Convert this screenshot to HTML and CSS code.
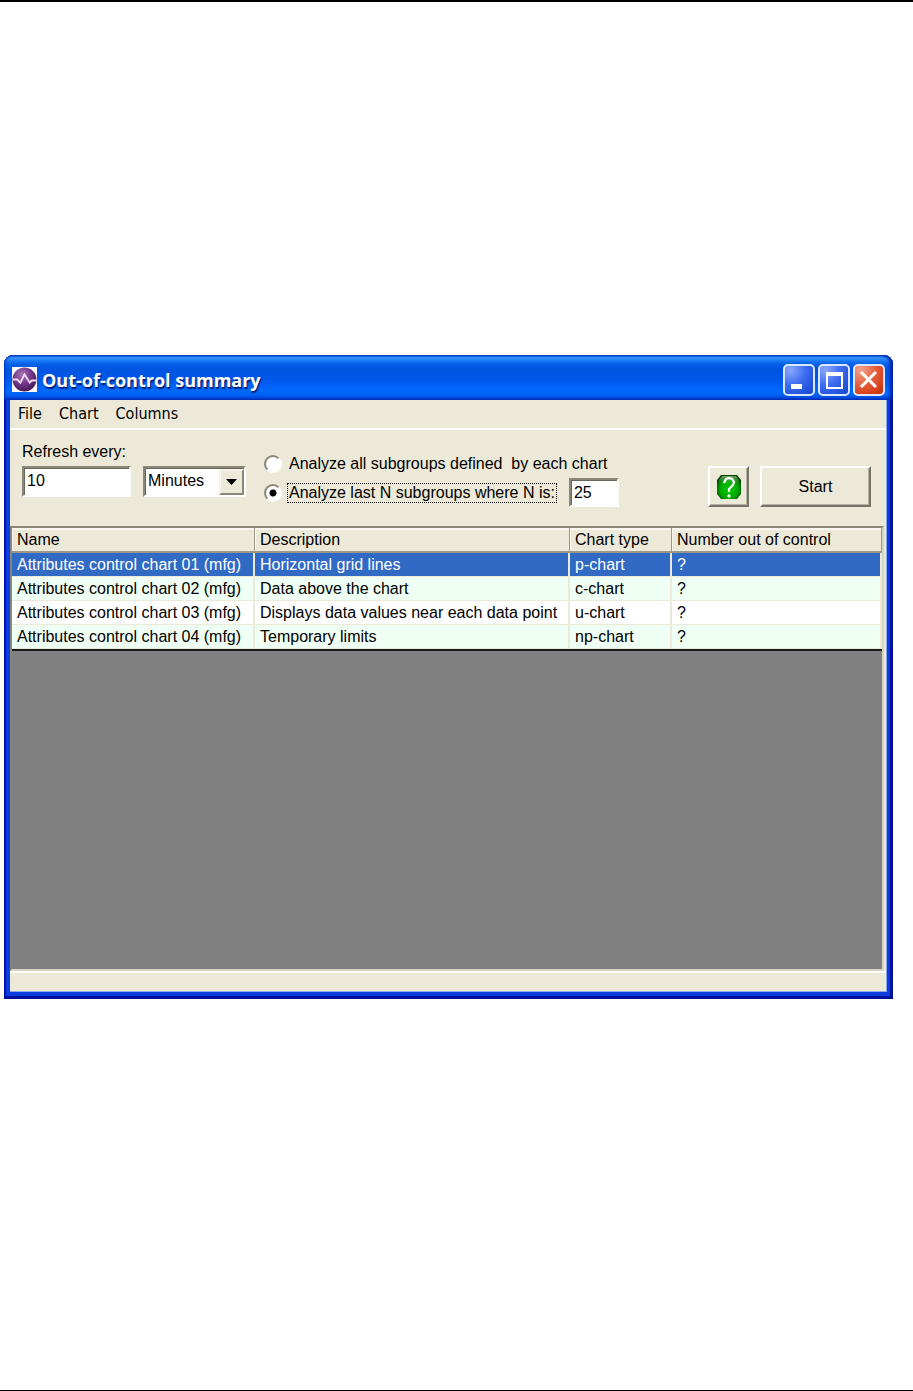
FILE: index.html
```html
<!DOCTYPE html>
<html lang="en">
<head>
<meta charset="utf-8">
<title>Out-of-control summary</title>
<link rel="stylesheet" href="styles.css">
</head>
<body>
<main class="window">
  <header class="titlebar">
    <svg class="app-icon" viewBox="0 0 24 24" aria-hidden="true">
      <defs><radialGradient id="orb" cx=".4" cy=".3" r=".75"><stop offset="0" stop-color="#a678b4"/><stop offset=".5" stop-color="#74388a"/><stop offset="1" stop-color="#421850"/></radialGradient></defs>
      <rect width="24" height="24" fill="#fff"/>
      <circle cx="12" cy="12" r="11.5" fill="url(#orb)"/>
      <path d="M1 12h4l3 3 4-8 5 8 2-2h5" fill="none" stroke="#f2dcf2" stroke-width="1.8"/>
    </svg>
    <h1 class="title">Out-of-control summary</h1>
    <div class="captions">
      <button class="caption" type="button" aria-label="Minimize"><svg viewBox="0 0 28 28"><path d="M6 18h11v5H6z" fill="#fff"/></svg></button>
      <button class="caption" type="button" aria-label="Maximize"><svg viewBox="0 0 28 28"><path d="M6 6h17v17H6zM8 10v11h13V10z" fill="#fff" fill-rule="evenodd"/></svg></button>
      <button class="caption caption-close" type="button" aria-label="Close"><svg viewBox="0 0 28 28"><path d="M6 6l15 15M21 6L6 21" stroke="#fff" stroke-width="3"/></svg></button>
    </div>
  </header>
  <div class="client">
    <nav class="menubar">
      <button class="menu" type="button">File</button>
      <button class="menu" type="button">Chart</button>
      <button class="menu" type="button">Columns</button>
    </nav>
    <form class="toolbar">
      <div class="refresh">
        <label class="refresh-label" for="every">Refresh every:</label>
        <div class="refresh-fields">
          <input class="field every" id="every" type="text" value="10">
          <div class="field select-box">
            <select class="select" aria-label="Refresh unit"><option>Minutes</option></select>
            <span class="select-arrow" aria-hidden="true"><svg viewBox="0 0 11 6"><path d="M0 0h11L5.500 6z"/></svg></span>
          </div>
        </div>
      </div>
      <div class="scope">
        <label class="choice"><input class="radio" type="radio" name="scope"><span class="choice-text">Analyze all subgroups defined&nbsp; by each chart</span></label>
        <div class="choice-row">
          <label class="choice"><input class="radio" type="radio" name="scope" checked><span class="choice-text choice-focus">Analyze last N subgroups where N is:</span></label>
          <input class="field count" type="text" value="25" aria-label="Number of subgroups">
        </div>
      </div>
      <div class="actions">
        <button class="push push-help" type="button" aria-label="Help">
          <svg viewBox="0 0 26 26">
            <defs><radialGradient id="leaf" cx=".5" cy=".6" r=".62"><stop offset="0" stop-color="#00cc00"/><stop offset=".6" stop-color="#00a800"/><stop offset="1" stop-color="#003800"/></radialGradient>
            <linearGradient id="shine" x2="0" y2="1"><stop offset="0" stop-color="#b0e0a8" stop-opacity=".6"/><stop offset="1" stop-color="#40b040" stop-opacity="0"/></linearGradient></defs>
            <path d="M5 1h16l4 5v14l-4 5H5l-4-5V6z" fill="url(#leaf)"/>
            <path d="M6 2h14l3 4v5H3V6z" fill="url(#shine)"/>
            <path d="M8 9l2-4 3-1 3 1 2 3-1 3-4 4v3" fill="none" stroke="#fff" stroke-width="2.200"/>
            <path d="M11 22l2-2 2 2-2 2z" fill="#fff"/>
          </svg>
        </button>
        <button class="push push-start" type="button">Start</button>
      </div>
    </form>
    <section class="grid-pane">
      <table class="grid">
        <colgroup><col class="col-name"><col class="col-description"><col class="col-type"><col></colgroup>
        <thead><tr><th scope="col">Name</th><th scope="col">Description</th><th scope="col">Chart type</th><th scope="col">Number out of control</th></tr></thead>
        <tbody>
          <tr class="selected"><td>Attributes control chart 01 (mfg)</td><td>Horizontal grid lines</td><td>p-chart</td><td>?</td></tr>
          <tr><td>Attributes control chart 02 (mfg)</td><td>Data above the chart</td><td>c-chart</td><td>?</td></tr>
          <tr><td>Attributes control chart 03 (mfg)</td><td>Displays data values near each data point</td><td>u-chart</td><td>?</td></tr>
          <tr><td>Attributes control chart 04 (mfg)</td><td>Temporary limits</td><td>np-chart</td><td>?</td></tr>
        </tbody>
      </table>
    </section>
    <footer class="statusbar"></footer>
  </div>
</main>
</body>
</html>
```
FILE: styles.css
```css
* { box-sizing: border-box; }

body {
  margin: 0;
  min-height: 100vh;
  padding: 353px 20px 0 4px;
  border-top: 2px solid #000;
  border-bottom: 1px solid #000;
  background: #fff;
  color: #000;
  font: 16px/20px "Liberation Sans", Arial, sans-serif;
}

button, input, select { font: inherit; color: inherit; }

.window {
  padding: 0 6px 7px;
  border-radius: 9px 9px 0 0;
  background: #0a3ce0;
  box-shadow: inset 2px 0 #0013b8, inset -3px 0 #00109c, inset 0 -3px #00109c;
}

/* Title bar */
.titlebar {
  display: flex;
  align-items: center;
  height: 45px;
  margin: 0 -6px;
  padding: 4px 8px 0 8px;
  border-radius: 9px 9px 0 0;
  background: linear-gradient(#0a4ec8 0, #3a92ff 3px, #2080fa 5px, #0560e8 9px, #0054e0 15px, #0058ea 25px, #0068fc 35px, #0062f4 40px, #0038c8 45px);
  box-shadow: inset -3px 0 3px #0020a8, inset 1px 0 2px #0030c0;
}
.app-icon { width: 25px; height: 25px; }
.title {
  flex: 1;
  margin: 0;
  padding-left: 5px;
  color: #fff;
  font: bold 18px/24px "Open Sans", sans-serif;
  text-shadow: 1px 2px 1px #082078;
}
.captions { display: flex; gap: 3px; }
.caption {
  width: 32px;
  height: 32px;
  padding: 0;
  border: 2px solid #dce8ff;
  border-radius: 5px;
  background: radial-gradient(circle at 20% 15%, #8ba8ff, #3e6df0 45%, #2456de 75%, #1846cc);
}
.caption-close { background: radial-gradient(circle at 20% 15%, #f3a18c, #e4603e 45%, #d8401a 75%, #b83410); }
.caption svg { display: block; width: 28px; height: 28px; }

.client { border: 1px solid #8ba9e8; border-top: 0; border-left: 0; background: #ece9d8; }

/* Menu */
.menubar {
  display: flex;
  gap: 17px;
  height: 30px;
  padding: 0 8px;
  border-bottom: 2px solid #fff;
}
.menu { padding: 0; border: 0; background: none; font-family: "DejaVu Sans Condensed", sans-serif; font-size: 16px; }

/* Toolbar */
.toolbar {
  display: flex;
  align-items: flex-end;
  height: 96px;
  padding: 0 15px 19px 12px;
}
.refresh { padding-bottom: 10px; }
.refresh-label { display: block; padding-bottom: 3px; line-height: 22px; }
.refresh-fields { display: flex; gap: 12px; }
.field {
  border: 2px solid;
  border-color: #8a8778 #fff #fff #8a8778;
  border-radius: 0;
  background: #fff;
  box-shadow: inset 1px 1px #69665c;
}
.every { width: 109px; height: 31px; padding: 0 3px 2px; }
.select-box { position: relative; width: 103px; height: 31px; }
.select {
  appearance: none;
  width: 100%;
  height: 27px;
  padding: 0 28px 2px 3px;
  border: 0;
  background: none;
}
.select-arrow {
  position: absolute;
  top: 1px;
  right: 0;
  display: grid;
  place-items: center;
  width: 25px;
  height: 26px;
  border: 2px solid;
  border-color: #f6f4ea #8a8778 #8a8778 #f6f4ea;
  background: #ece9d8;
  pointer-events: none;
}
.select-arrow svg { width: 11px; height: 6px; }

.scope { padding: 0 0 0 18px; }
.choice { display: flex; align-items: center; gap: 5px; }
.choice-text { padding: 0 1px; border: 1px dotted transparent; line-height: 18px; white-space: nowrap; }
.choice-focus { border-color: #000; }
.choice-row { display: flex; align-items: center; gap: 12px; padding-top: 4px; }
.radio {
  appearance: none;
  flex: none;
  width: 18px;
  height: 18px;
  margin: 0;
  border: 2px solid;
  border-color: #8a8778 #fff #fff #8a8778;
  border-radius: 50%;
  background: #fff;
}
.radio:checked { background: radial-gradient(circle, #000 3px, #fff 4px); }
.count { width: 50px; height: 29px; padding: 0 3px; }

.actions { display: flex; gap: 11px; margin-left: auto; }
.push {
  height: 41px;
  padding: 0;
  border: 2px solid;
  border-color: #fff #77746a #77746a #fff;
  background: #ece9d8;
  box-shadow: inset -1px -1px #b5b2a2;
}
.push-help { display: grid; place-items: center; width: 41px; }
.push-help svg { width: 26px; height: 26px; }
.push-start { width: 111px; }

/* Results grid */
.grid-pane {
  min-height: 445px;
  margin-right: 2px;
  border: 2px solid;
  border-color: #8a8778 #d8d4c6 #d8d4c6 #8a8778;
  background: #808080;
}
.grid {
  width: 100%;
  border-collapse: separate;
  border-spacing: 0;
  border-bottom: 2px solid #181818;
  table-layout: fixed;
}
.col-name { width: 243px; }
.col-description { width: 315px; }
.col-type { width: 102px; }
.grid th, .grid td {
  height: 24px;
  padding: 0 5px;
  border-right: 2px solid #ece9d8;
  border-bottom: 1px solid #ece9d8;
  font-weight: normal;
  text-align: left;
  white-space: nowrap;
}
.grid th {
  height: 25px;
  border-right: 1px solid #9b9889;
  border-bottom: 2px solid #9b9889;
  background: #ece9d8;
  box-shadow: inset 1px 2px #f8f6ee;
}
.grid td { background: #fff; }
.grid tbody tr:nth-child(even) td { background: #f0fff4; }
.grid .selected td { background: #316ac5; color: #fff; }

.statusbar { height: 20px; border-top: 2px solid #fff; }
```
